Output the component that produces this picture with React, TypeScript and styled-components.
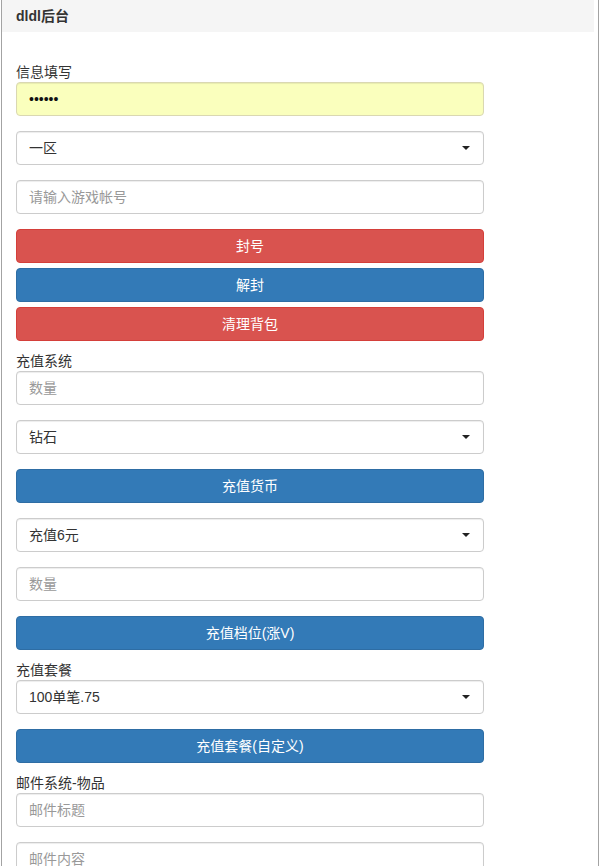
import React from "react";
import styled, { createGlobalStyle } from "styled-components";

const Global = createGlobalStyle`
  html, body { margin: 0; padding: 0; background: #fff; }
  body {
    font-family: "Liberation Sans", "Noto Sans CJK SC", Arial, sans-serif;
    font-size: 14px;
    line-height: 20px;
    color: #333;
  }
  * { box-sizing: border-box; }
`;

const Page = styled.div`
  padding: 0 1px;
  height: 866px;
  overflow: hidden;
`;

const Panel = styled.div`
  border-left: 1px solid #a3a3a3;
  border-right: 1px solid #a3a3a3;
  min-height: 866px;
  background: #fff;
`;

const Heading = styled.div`
  height: 32px;
  background: #f5f5f5;
  padding: 6px 14px;
  font-weight: bold;
  font-size: 14px;
  line-height: 20px;
  color: #333;
  margin-right: 4px;
`;

const Body = styled.div`
  padding: 30px 14px 0;
  width: 496px;
  display: flex;
  flex-direction: column;
`;

const Label = styled.label<{ $top?: number }>`
  display: block;
  margin-top: ${(p) => p.$top ?? 5}px;
  line-height: 20px;
  font-size: 14px;
  color: #333;
`;

const Input = styled.input<{ $autofill?: boolean }>`
  display: block;
  width: 100%;
  height: 34px;
  margin: 0 0 15px;
  padding: 6px 12px;
  font-family: inherit;
  font-size: 14px;
  line-height: 20px;
  color: ${(p) => (p.$autofill ? "#111" : "#555")};
  background: ${(p) => (p.$autofill ? "#faffbd" : "#fff")};
  border: 1px solid ${(p) => (p.$autofill ? "#dad8b2" : "#ccc")};
  border-radius: 4px;
  box-shadow: inset 0 1px 1px rgba(0, 0, 0, 0.075);
  outline: none;
  &::placeholder { color: #999; }
`;

const SelectWrap = styled.div`
  position: relative;
  margin: 0 0 15px;
  &::after {
    content: "";
    position: absolute;
    right: 14px;
    top: 15px;
    border-left: 4px solid transparent;
    border-right: 4px solid transparent;
    border-top: 4px solid #222;
    pointer-events: none;
  }
`;

const Select = styled.select`
  display: block;
  width: 100%;
  height: 34px;
  padding: 6px 12px;
  font-family: inherit;
  font-size: 14px;
  line-height: 20px;
  color: #333;
  background: #fff;
  border: 1px solid #ccc;
  border-radius: 4px;
  box-shadow: inset 0 1px 1px rgba(0, 0, 0, 0.075);
  appearance: none;
  -webkit-appearance: none;
  outline: none;
`;

const Button = styled.button<{ $variant: "danger" | "primary"; $after?: number }>`
  display: block;
  width: 100%;
  height: 34px;
  margin: 0 0 ${(p) => p.$after ?? 5}px;
  padding: 6px 12px;
  font-family: inherit;
  font-size: 14px;
  line-height: 20px;
  color: #fff;
  text-align: center;
  border-radius: 4px;
  cursor: pointer;
  background: ${(p) => (p.$variant === "danger" ? "#d9534f" : "#337ab7")};
  border: 1px solid ${(p) => (p.$variant === "danger" ? "#d43f3a" : "#2e6da4")};
`;

function Dropdown({ value, options }: { value: string; options: string[] }) {
  return (
    <SelectWrap>
      <Select defaultValue={value}>
        {options.map((o) => (
          <option key={o} value={o}>
            {o}
          </option>
        ))}
      </Select>
    </SelectWrap>
  );
}

export default function App() {
  return (
    <>
      <Global />
      <Page>
        <Panel>
          <Heading>dldl后台</Heading>
          <Body>
            <Label $top={0}>信息填写</Label>
            <Input type="password" defaultValue="123456" $autofill />
            <Dropdown value="一区" options={["一区", "二区", "三区"]} />
            <Input placeholder="请输入游戏帐号" />
            <Button $variant="danger">封号</Button>
            <Button $variant="primary">解封</Button>
            <Button $variant="danger">清理背包</Button>

            <Label>充值系统</Label>
            <Input placeholder="数量" />
            <Dropdown value="钻石" options={["钻石", "金币"]} />
            <Button $variant="primary" $after={15}>充值货币</Button>
            <Dropdown value="充值6元" options={["充值6元", "充值30元", "充值68元"]} />
            <Input placeholder="数量" />
            <Button $variant="primary">充值档位(涨V)</Button>

            <Label>充值套餐</Label>
            <Dropdown value="100单笔.75" options={["100单笔.75"]} />
            <Button $variant="primary">充值套餐(自定义)</Button>

            <Label>邮件系统-物品</Label>
            <Input placeholder="邮件标题" />
            <Input placeholder="邮件内容" />
          </Body>
        </Panel>
      </Page>
    </>
  );
}
